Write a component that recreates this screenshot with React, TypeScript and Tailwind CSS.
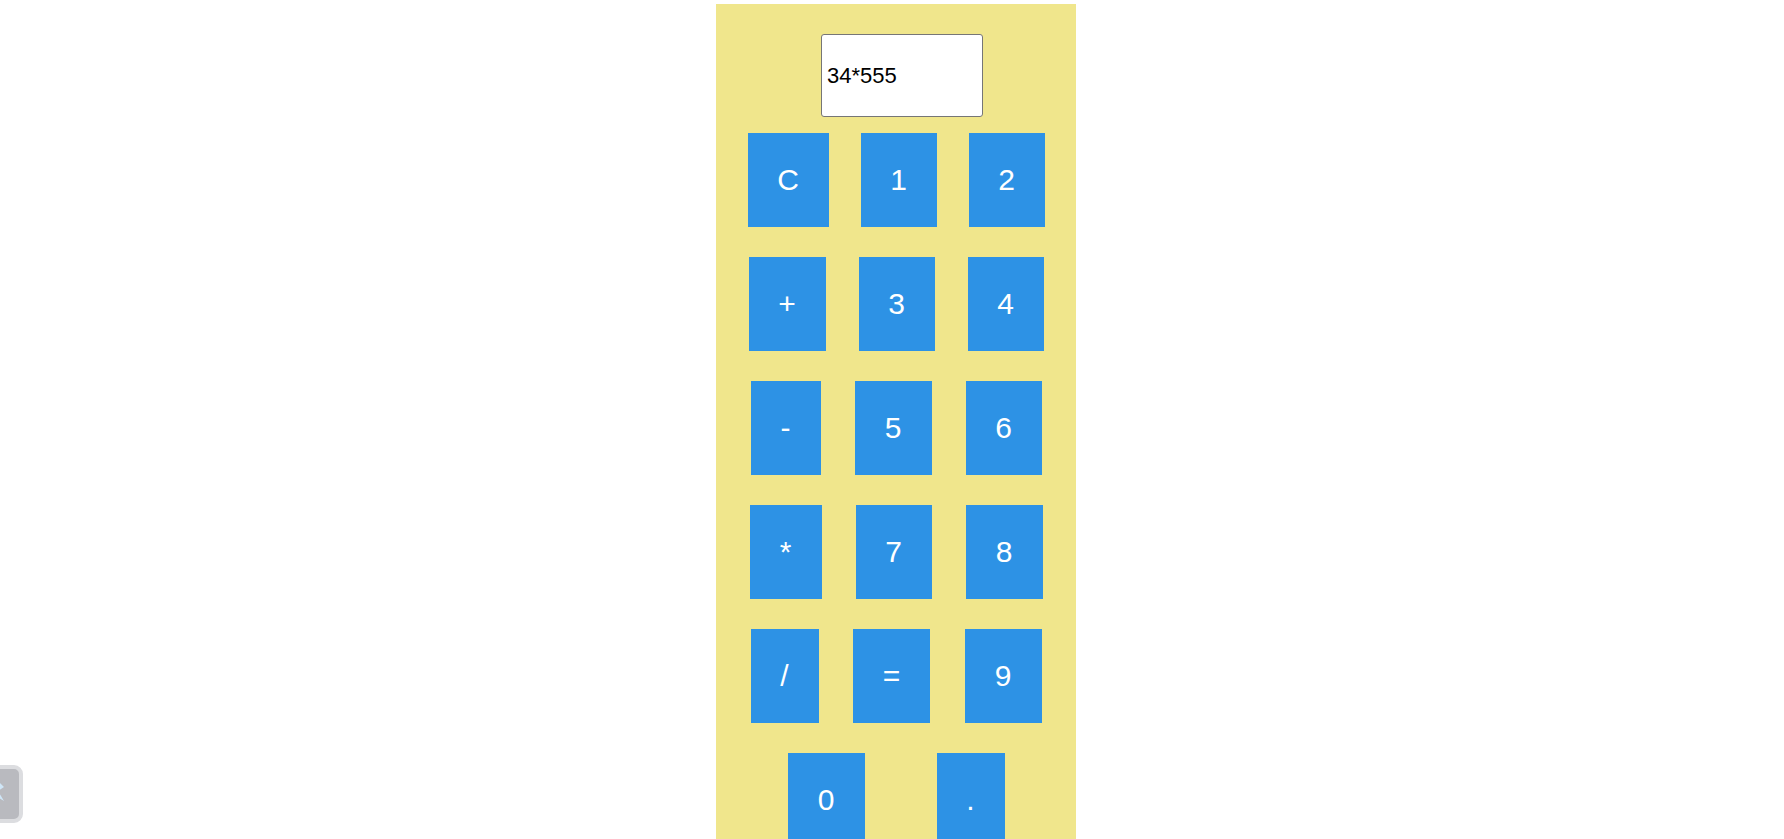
import React from "react";

const Btn = ({ label, w }: { label: string; w: string }) => (
  <button
    className={`${w} h-[94px] bg-[#2d92e5] text-white text-[30px] leading-[34px] flex items-center justify-center shrink-0`}
    style={{ fontFamily: '"Liberation Sans", Arial, sans-serif' }}
  >
    {label}
  </button>
);

export default function App() {
  return (
    <div className="min-h-screen bg-white relative overflow-hidden" style={{ fontFamily: '"Liberation Sans", Arial, sans-serif' }}>
      <div className="flex justify-center pl-2 pt-[4px]">
        <div className="w-[360px] bg-[#f0e68c] flex flex-col items-center pt-[30px] pb-[40px]">
          <div className="ml-[12px] w-[162px] h-[83px] bg-white border border-[#767676] rounded-[3px] flex items-center pl-[5px] text-[22px] text-black">
            34*555
          </div>
          <div className="flex flex-col gap-[30px] mt-[16px] w-full">
            <div className="flex justify-center gap-[32px]">
              <Btn label="C" w="w-[81px]" />
              <Btn label="1" w="w-[76px]" />
              <Btn label="2" w="w-[76px]" />
            </div>
            <div className="flex justify-center gap-[33px]">
              <Btn label="+" w="w-[77px]" />
              <Btn label="3" w="w-[76px]" />
              <Btn label="4" w="w-[76px]" />
            </div>
            <div className="flex justify-center gap-[34px]">
              <Btn label="-" w="w-[70px]" />
              <Btn label="5" w="w-[77px]" />
              <Btn label="6" w="w-[76px]" />
            </div>
            <div className="flex justify-center gap-[34px]">
              <Btn label="*" w="w-[72px]" />
              <Btn label="7" w="w-[76px]" />
              <Btn label="8" w="w-[77px]" />
            </div>
            <div className="flex justify-center gap-[34.5px]">
              <Btn label="/" w="w-[68px]" />
              <Btn label="=" w="w-[77px]" />
              <Btn label="9" w="w-[77px]" />
            </div>
            <div className="flex justify-center gap-[72px]">
              <Btn label="0" w="w-[77px]" />
              <Btn label="." w="w-[68px]" />
            </div>
          </div>
        </div>
      </div>
      <div className="fixed left-[-36px] top-[765px] w-[59px] h-[58px] rounded-[9px] border-[4px] border-[#dcdde0] bg-[#b9babf] overflow-hidden">
        <svg className="absolute right-[13px] top-[6px]" width="14" height="30" viewBox="0 0 14 30">
          <path d="M2 2 L12 12 L6 16 L12 26 L2 20 L8 15 Z" fill="#cfe6f7" />
        </svg>
      </div>
    </div>
  );
}
